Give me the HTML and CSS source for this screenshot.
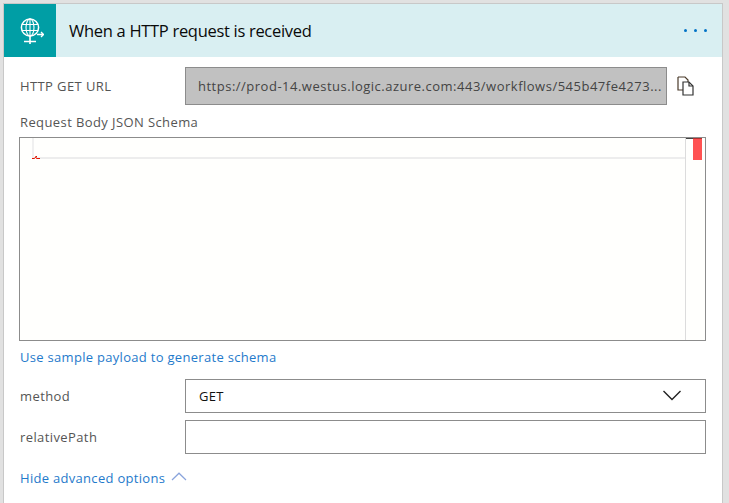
FILE: index.html
```html
<!DOCTYPE html>
<html lang="en">
<head>
<meta charset="utf-8">
<title>When a HTTP request is received</title>
<link rel="stylesheet" href="styles.css">
</head>
<body>
<div class="card">
  <header class="head">
    <div class="tile">
      <svg width="28" height="28" viewBox="0 0 28 28" fill="none" stroke="#fff" stroke-width="1.100">
        <circle cx="14" cy="10.500" r="8.600" stroke-width="1.500"/>
        <ellipse cx="14" cy="10.500" rx="4" ry="8.600"/>
        <path d="M14 2v17M6 7.500h16M6 13.500h16"/>
        <path d="M14 19v8M8 24.500h12" stroke-width="1.600"/>
        <path d="M21 17.500h6.500M25 15 27.500 17.500 25 20" stroke-width="1.300"/>
      </svg>
    </div>
    <h1 class="title">When a HTTP request is received</h1>
    <div class="dots"><i></i><i></i><i></i></div>
  </header>
  <div class="body">
    <div class="row url-row">
      <span class="label">HTTP GET URL</span>
      <div class="url">https://prod-14.westus.logic.azure.com:443/workflows/545b47fe4273...</div>
      <svg class="copy" width="18" height="20" viewBox="0 0 18 20" fill="none" stroke="#333" stroke-width="1.200">
        <path d="M1 1h7l3 3v2M1 1v13h5" stroke="#4a3a2a"/>
        <path d="M6 6h6l4 4v9H6z" fill="#fff"/>
        <path d="M12 6v4h4"/>
      </svg>
    </div>
    <div class="label schema-label">Request Body JSON Schema</div>
    <div class="editor">
      <div class="gutter"></div>
      <div class="line"></div>
      <svg class="squiggle" width="8" height="5" viewBox="0 0 8 5" fill="none" stroke="#e51400"><path d="M0 3.500h2.500L4 1.500h1M3.500 1.500l1 2h3.500"/></svg>
      <div class="rule"></div>
      <div class="cursor"></div>
      <div class="mark"></div>
    </div>
    <a class="link sample">Use sample payload to generate schema</a>
    <div class="row method">
      <span class="label">method</span>
      <div class="field select">GET
        <svg class="chev" width="20" height="11" viewBox="0 0 20 11" fill="none" stroke="#222" stroke-width="1.400"><path d="M1.500 1 10 9.500 18.500 1"/></svg>
      </div>
    </div>
    <div class="row path">
      <span class="label">relativePath</span>
      <div class="field"></div>
    </div>
    <a class="link hide">Hide advanced options
      <svg width="16" height="9" viewBox="0 0 16 9" fill="none" stroke="#8aa4dc" stroke-width="1.200"><path d="M1 8 8 1.200 15 8"/></svg>
    </a>
  </div>
</div>
</body>
</html>
```
FILE: styles.css
```css
* { box-sizing: border-box; }
html, body { margin: 0; height: 503px; overflow: hidden; }
body {
  background: #e1e1e1;
  padding: 3px 6px 0 3px;
  font-family: "Open Sans", "Noto Sans", sans-serif;
  font-size: 13px;
  color: #333;
}
.card {
  height: 500px;
  background: #fff;
  border: 1px solid #c8c8c8;
  border-bottom: 0;
}
.head {
  display: flex;
  align-items: center;
  height: 53px;
  background: #d9eff2;
}
.tile {
  width: 52px;
  height: 53px;
  background: #009ea5;
  display: flex;
  align-items: center;
  justify-content: center;
}
.title {
  margin: 0 0 0 13px;
  flex: 1;
  font-size: 16.500px;
  font-weight: 400;
  color: #0a0a0a;
  letter-spacing: -.3px;
}
.dots { display: flex; gap: 7px; margin-right: 15px; }
.dots i { width: 3px; height: 3px; border-radius: 50%; background: #0072c6; }
.body { padding: 10px 15px 0; }
.row { display: flex; align-items: center; }
.label { width: 166px; flex: none; padding-left: 1px; color: #555; letter-spacing: .4px; }
.url {
  width: 482px;
  height: 38px;
  line-height: 36px;
  background: #c1c1c1;
  border: 1px solid #8c8c8c;
  padding-left: 12px;
  color: #444;
  white-space: nowrap;
  overflow: hidden;
  letter-spacing: .5px;
}
.copy { margin-left: 10px; }
.schema-label { width: auto; margin-top: 7px; height: 25px; line-height: 20px; }
.editor {
  position: relative;
  width: 687px;
  height: 204px;
  border: 1px solid #8c8c8c;
  background: #fffffd;
}
.gutter {
  position: absolute;
  left: 12px;
  top: 0;
  width: 2px;
  height: 20px;
  background: #f0f0f0;
}
.line {
  position: absolute;
  left: 12px;
  top: 19px;
  width: 653px;
  height: 2px;
  background: #ededed;
}
.squiggle { position: absolute; left: 12px; top: 17px; }
.rule { position: absolute; left: 665px; top: 0; bottom: 0; width: 1px; background: #dcdcdc; }
.cursor { position: absolute; left: 666px; top: 0; width: 7px; height: 1px; background: #444; }
.mark {
  position: absolute;
  right: 3px;
  top: 0;
  width: 9px;
  height: 22px;
  background: #ff5252;
  border-top: 1px solid #b03030;
}
.link { display: block; padding-left: 1px; color: #1f7acb; letter-spacing: .3px; }
.sample { margin-top: 6px; height: 32px; line-height: 20px; }
.field {
  position: relative;
  width: 521px;
  height: 34px;
  border: 1px solid #8c8c8c;
  background: #fff;
}
.select { padding-left: 13px; line-height: 32px; color: #111; letter-spacing: .3px; }
.chev { position: absolute; right: 23px; top: 10px; }
.path { margin-top: 7px; }
.hide { margin-top: 14px; line-height: 20px; display: flex; align-items: center; gap: 6px; }
.hide svg { margin-bottom: 3px; }
```
